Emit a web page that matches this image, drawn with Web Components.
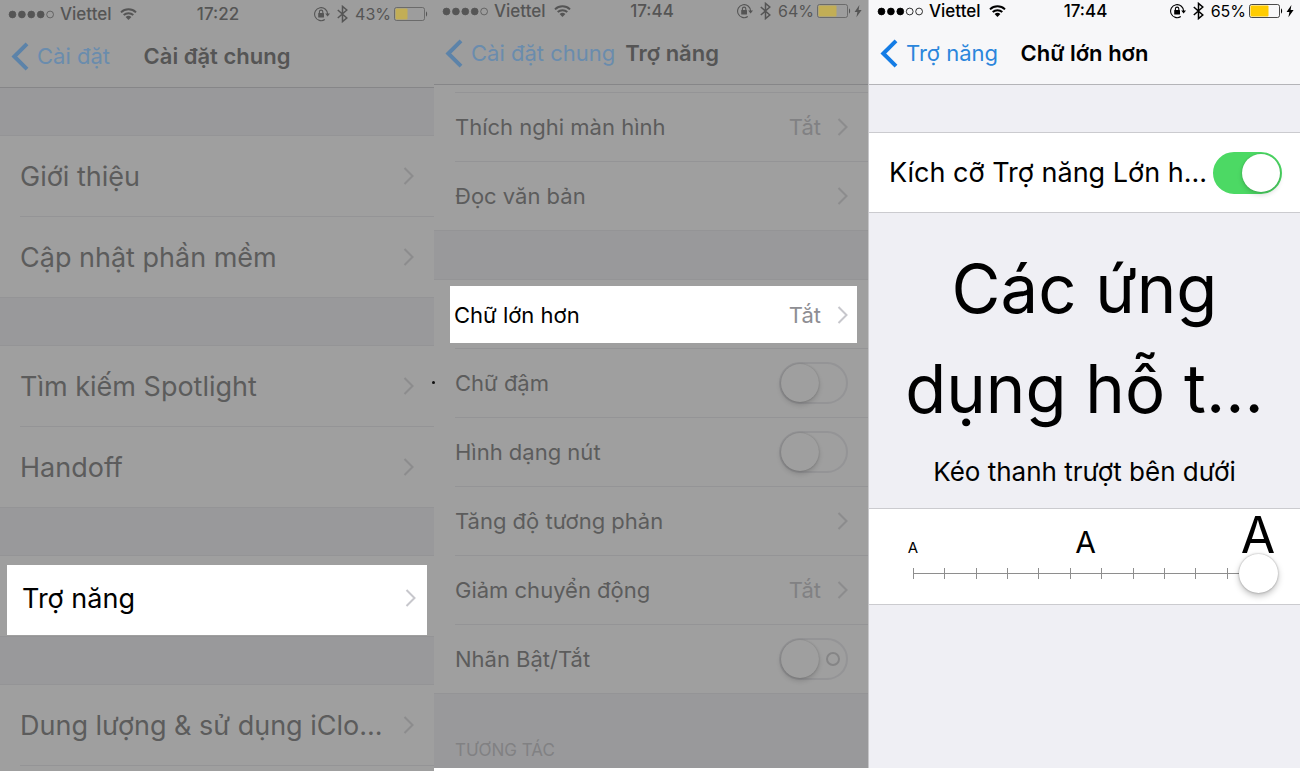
<!DOCTYPE html>
<html lang="vi">
<head>
<meta charset="utf-8">
<meta name="viewport" content="width=device-width, initial-scale=1">
<title>Trợ năng</title>
<style>
  html, body {
    height: 100%;
  }

  body {
    background: #ffffff;
    font-family: Inter, "Liberation Sans", sans-serif;
    margin: 0;
  }
</style>
</head>
<body>
<ios-gallery>
  <ios-screen dimmed offset>
    <ios-status slot="header" signal="4" time="17:22" battery="43"></ios-status>
    <ios-nav slot="header" back="Cài đặt" label="Cài đặt chung"></ios-nav>
    <ios-group>
      <ios-row label="Giới thiệu"></ios-row>
      <ios-row label="Cập nhật phần mềm"></ios-row>
    </ios-group>
    <ios-group>
      <ios-row label="Tìm kiếm Spotlight"></ios-row>
      <ios-row label="Handoff"></ios-row>
    </ios-group>
    <ios-group>
      <ios-row label="Trợ năng" highlighted></ios-row>
    </ios-group>
    <ios-group>
      <ios-row label="Dung lượng &amp; sử dụng iClo..."></ios-row>
      <ios-row label=""></ios-row>
    </ios-group>
  </ios-screen>
  <ios-screen dimmed compact>
    <ios-status slot="header" signal="4" time="17:44" battery="64" charging></ios-status>
    <ios-nav slot="header" back="Cài đặt chung" label="Trợ năng"></ios-nav>
    <ios-group continued>
      <ios-row label="Thích nghi màn hình" value="Tắt"></ios-row>
      <ios-row label="Đọc văn bản"></ios-row>
    </ios-group>
    <ios-group>
      <ios-row label="Chữ lớn hơn" value="Tắt" highlighted></ios-row>
      <ios-row label="Chữ đậm" type="switch"></ios-row>
      <ios-row label="Hình dạng nút" type="switch"></ios-row>
      <ios-row label="Tăng độ tương phản"></ios-row>
      <ios-row label="Giảm chuyển động" value="Tắt"></ios-row>
      <ios-row label="Nhãn Bật/Tắt" type="switch" marked></ios-row>
    </ios-group>
    <ios-caption>TƯƠNG TÁC</ios-caption>
  </ios-screen>
  <ios-screen>
    <ios-status slot="header" signal="3" time="17:44" battery="65" charging></ios-status>
    <ios-nav slot="header" back="Trợ năng" label="Chữ lớn hơn"></ios-nav>
    <ios-group>
      <ios-row label="Kích cỡ Trợ năng Lớn h..." type="switch" checked></ios-row>
    </ios-group>
    <ios-preview>
      Các ứng<br>dụng hỗ t...
      <span slot="hint">Kéo thanh trượt bên dưới</span>
    </ios-preview>
    <ios-text-size></ios-text-size>
  </ios-screen>
</ios-gallery>

<script>
  class IOSElement extends HTMLElement {
    constructor( markup ) {
      super();

      const template = document.createElement( 'template' );
      template.innerHTML = markup;

      // Root
      this.attachShadow( {mode: 'open'} );
      this.shadowRoot.appendChild( template.content.cloneNode( true ) );
    }

    $( selector ) {
      return this.shadowRoot.querySelector( selector );
    }
  }

  // Three screens side by side
  class IOSGallery extends IOSElement {
    constructor() {
      super( /* template */ `
        <style>
          :host {
            display: grid;
            grid-template-columns: 217fr 217fr 216fr;
            height: 100%;
            overflow: hidden;
            position: relative;
          }

          i {
            background: #111111;
            border-radius: 50%;
            height: 3px;
            left: 432px;
            position: absolute;
            top: 381px;
            width: 3px;
          }
        </style>
        <slot></slot>
        <i></i>
      ` );
    }
  }

  window.customElements.define( 'ios-gallery', IOSGallery );

  // Colours for everything inside come from here
  class IOSScreen extends IOSElement {
    constructor() {
      super( /* template */ `
        <style>
          :host {
            --bar: #f7f7f9;
            --page: #efeff4;
            --cell: #ffffff;
            --line: #cbcbcf;
            --bar-line: #b4b4b8;
            --ink: #000000;
            --title: #000000;
            --muted: #8e8e93;
            --arrow: #c7c7cc;
            --blue: #147ce5;
            --link: #2b86dc;
            --power: #ffcc00;
            --row: 79px;
            --text: 27px;
            --gap: 47px;
            --inset: 20px;
            --inset-right: 18px;
            background: var( --page );
            box-sizing: border-box;
            color: var( --ink );
            display: flex;
            flex-direction: column;
            margin-bottom: 3px;
            min-width: 0;
            overflow: hidden;
          }

          :host( :not( [dimmed] ) ) {
            border-left: 1px solid #c6c6c9;
          }

          :host( [dimmed] ) {
            --bar: #9d9d9d;
            --page: #99999b;
            --cell: #9f9f9f;
            --line: #949496;
            --bar-line: #868688;
            --ink: #5c5c5c;
            --title: #555555;
            --muted: #818183;
            --arrow: #8c8c8d;
            --blue: #5c83a9;
            --link: #6a8cad;
            --power: #c2ae56;
            --row: 80px;
            --inset-right: 20px;
          }

          :host( [compact] ) {
            --row: 68px;
            --text: 22px;
            --gap: 48px;
            --inset: 21px;
          }

          :host( [offset] ) {
            margin-bottom: 0;
          }

          header {
            background: var( --bar );
            border-bottom: 1px solid var( --bar-line );
            flex: none;
          }

          :host( [offset] ) header {
            padding-top: 3px;
          }
        </style>
        <header><slot name="header"></slot></header>
        <slot></slot>
      ` );
    }
  }

  window.customElements.define( 'ios-screen', IOSScreen );

  class IOSStatus extends IOSElement {
    constructor() {
      super( /* template */ `
        <style>
          :host {
            align-items: center;
            color: var( --title );
            display: grid;
            font-size: 17px;
            font-weight: 500;
            grid-template-columns: 1fr auto 1fr;
            height: 22px;
            padding: 0 6px 0 8px;
          }

          div {
            align-items: center;
            display: flex;
          }

          div:last-child {
            font-size: 16px;
            font-weight: 400;
            justify-content: flex-end;
          }

          svg {
            display: block;
            flex: none;
          }

          [part=wifi] {
            margin-left: 8px;
          }

          [part=signal] {
            margin-right: 5px;
          }

          [part=lock], [part=bluetooth] {
            margin-right: 7px;
          }

          [part=level] {
            margin-right: 3px;
          }

          [part=bolt] {
            display: none;
            margin-left: 3px;
          }

          :host( [charging] ) [part=bolt] {
            display: block;
          }
        </style>
        <div>
          <svg part="signal" width="47" height="9" viewBox="0 0 47 9" stroke="currentColor"></svg>
          <span>Viettel</span>
          <svg part="wifi" width="17" height="12" viewBox="0 0 17 12" fill="none" stroke="currentColor" stroke-width="2">
            <path d="M1 4.4a10.8 10.8 0 0 1 15 0M3.7 7.1a7 7 0 0 1 9.6 0"/>
            <path d="M5.6 9.1a4.2 4.2 0 0 1 5.8 0L8.5 12z" fill="currentColor" stroke="none"/>
          </svg>
        </div>
        <time></time>
        <div>
          <svg part="lock" width="16" height="16" viewBox="0 0 16 16" fill="none" stroke="currentColor">
            <path d="M10.8 13.5A6.5 6.5 0 1 1 13.6 8.4" stroke-width="1.1"/>
            <path d="M11.2 7.6h4.8L13.6 10.4z" fill="currentColor" stroke="none"/>
            <rect x="4.2" y="7" width="5.8" height="4.4" rx=".5" fill="currentColor" stroke="none"/>
            <path d="M5.4 7V5.8a1.7 1.7 0 0 1 3.4 0V7" stroke-width="1.1"/>
          </svg>
          <svg part="bluetooth" width="11" height="18" viewBox="0 0 11 18" fill="none" stroke="currentColor" stroke-width="1.5">
            <path d="M.8 5l9 8-4.300 3.600V1.400L9.800 5l-9 8"/>
          </svg>
          <span part="level"></span>
          <svg width="34" height="14" viewBox="0 0 34 14">
            <rect x=".5" y=".5" width="30" height="13" rx="2" fill="none" stroke="currentColor" stroke-opacity=".7"/>
            <rect part="charge" x="1.500" y="1.500" height="11" rx="1" fill="var( --power )"/>
            <path d="M32 4.500c1.500.4 1.500 4.600 0 5z" fill="currentColor"/>
          </svg>
          <svg part="bolt" width="8" height="14" viewBox="0 0 8 14" fill="currentColor">
            <path d="M5.400 1L.6 8h2.800L2.400 13.200 7.600 6H4.600z"/>
          </svg>
        </div>
      ` );
    }

    connectedCallback() {
      const signal = parseInt( this.getAttribute( 'signal' ) );
      const battery = parseInt( this.getAttribute( 'battery' ) );
      let dots = '';

      for( let d = 0; d < 5; d++ ) {
        const fill = d < signal ? 'currentColor' : 'none';
        dots += `<circle cx="${4.5 + d * 9.4}" cy="4.5" r="3.4" fill="${fill}" stroke-width=".8"/>`;
      }

      this.$( '[part=signal]' ).innerHTML = dots;
      this.$( 'time' ).textContent = this.getAttribute( 'time' );
      this.$( '[part=level]' ).textContent = `${battery}%`;
      this.$( '[part=charge]' ).setAttribute( 'width', Math.round( battery * 0.28 ) );
    }
  }

  window.customElements.define( 'ios-status', IOSStatus );

  class IOSNav extends IOSElement {
    constructor() {
      super( /* template */ `
        <style>
          :host {
            align-items: center;
            display: grid;
            font-size: 22px;
            grid-template-columns: 1fr auto 1fr;
            height: 62px;
            line-height: 28px;
            padding: 0 11px;
            white-space: nowrap;
          }

          a {
            align-items: center;
            color: var( --link );
            display: flex;
            gap: 8px;
            margin-right: 10px;
            text-decoration: none;
          }

          svg {
            color: var( --blue );
            flex: none;
          }

          h1 {
            color: var( --title );
            font-size: 22px;
            font-weight: 600;
            margin: 0;
          }
        </style>
        <a href="#">
          <svg width="18" height="29" viewBox="0 0 18 29" fill="none" stroke="currentColor" stroke-width="4">
            <path d="M16 1.800L3.300 14.500 16 27.200"/>
          </svg>
          <span></span>
        </a>
        <h1></h1>
      ` );
    }

    connectedCallback() {
      this.$( 'span' ).textContent = this.getAttribute( 'back' );
      this.$( 'h1' ).textContent = this.getAttribute( 'label' );
    }
  }

  window.customElements.define( 'ios-nav', IOSNav );

  class IOSGroup extends IOSElement {
    constructor() {
      super( /* template */ `
        <style>
          :host {
            background: var( --cell );
            border-bottom: 1px solid var( --line );
            border-top: 1px solid var( --line );
            display: block;
            flex: none;
            margin-top: var( --gap );
          }

          /* Scrolled under the bar, only the end of the row above shows */
          :host( [continued] ) {
            --first: 1px;
            border-top: none;
            margin-top: 0;
            padding-top: 7px;
          }
        </style>
        <slot></slot>
      ` );
    }
  }

  window.customElements.define( 'ios-group', IOSGroup );

  class IOSSwitch extends IOSElement {
    constructor() {
      super( /* template */ `
        <style>
          :host {
            display: block;
            flex: none;
          }

          input {
            appearance: none;
            align-items: center;
            background: var( --cell );
            border: 2px solid var( --line );
            border-radius: 21px;
            box-sizing: border-box;
            display: flex;
            height: 42px;
            margin: 0;
            width: 69px;
          }

          input::before {
            background: var( --cell );
            border-radius: 50%;
            box-shadow: 0 3px 5px rgba( 0, 0, 0, 0.15 ), 0 0 2px rgba( 0, 0, 0, 0.2 );
            content: '';
            height: 38px;
            width: 38px;
          }

          input:checked {
            background: #4cd964;
            border-color: #4cd964;
            justify-content: flex-end;
          }

          :host( [marked] ) input::after {
            border: 2px solid #858586;
            border-radius: 50%;
            content: '';
            height: 10px;
            margin-left: 7px;
            width: 10px;
          }
        </style>
        <input type="checkbox" role="switch">
      ` );
    }

    connectedCallback() {
      this.$( 'input' ).checked = this.hasAttribute( 'checked' );
      this.$( 'input' ).setAttribute( 'aria-label', this.getAttribute( 'label' ) );
    }
  }

  window.customElements.define( 'ios-switch', IOSSwitch );

  class IOSRow extends IOSElement {
    constructor() {
      super( /* template */ `
        <style>
          :host {
            display: block;
            white-space: nowrap;
          }

          /* Separator is inset to the text */
          :host::before {
            background: var( --line );
            content: '';
            display: block;
            height: 1px;
            margin-left: var( --inset );
          }

          :host( :first-child )::before {
            height: var( --first, 0 );
          }

          a, div {
            align-items: center;
            box-sizing: border-box;
            color: inherit;
            display: flex;
            font-size: var( --text );
            gap: 16px;
            height: var( --row );
            padding: 0 var( --inset-right ) 0 var( --inset );
            text-decoration: none;
          }

          div {
            gap: 6px;
          }

          .label {
            flex: 1;
          }

          .value {
            color: var( --muted );
          }

          svg {
            color: var( --arrow );
            flex: none;
          }

          :host( [highlighted] ) {
            --arrow: #c7c7cc;
            --muted: #8e8e93;
            align-items: stretch;
            box-sizing: border-box;
            color: #000000;
            display: flex;
            height: var( --row );
            padding: 9px 7px 1px 7px;
          }

          :host( [highlighted][value] ) {
            padding: 6px 11px 5px 16px;
          }

          :host( [highlighted] )::before {
            display: none;
          }

          :host( [highlighted] ) a {
            background: #ffffff;
            flex: 1;
            height: auto;
            padding: 0 11px 4px 15px;
          }

          :host( [highlighted][value] ) a {
            padding: 0 9px 0 4px;
          }
        </style>
      ` );
    }

    connectedCallback() {
      const label = this.getAttribute( 'label' );
      const toggle = this.getAttribute( 'type' ) === 'switch';
      const $row = document.createElement( toggle ? 'div' : 'a' );
      const $label = document.createElement( 'span' );

      $label.className = 'label';
      $label.textContent = label;
      $row.appendChild( $label );

      if( toggle ) {
        const $switch = document.createElement( 'ios-switch' );
        $switch.setAttribute( 'label', label );
        $switch.toggleAttribute( 'checked', this.hasAttribute( 'checked' ) );
        $switch.toggleAttribute( 'marked', this.hasAttribute( 'marked' ) );
        $row.appendChild( $switch );
      } else {
        $row.href = '#';

        if( this.hasAttribute( 'value' ) ) {
          const $value = document.createElement( 'span' );
          $value.className = 'value';
          $value.textContent = this.getAttribute( 'value' );
          $row.appendChild( $value );
        }

        $row.insertAdjacentHTML( 'beforeend', `
          <svg width="11" height="18" viewBox="0 0 11 18" fill="none" stroke="currentColor" stroke-width="2">
            <path d="M1.500 1L9.500 9l-8 8"/>
          </svg>
        ` );
      }

      this.shadowRoot.appendChild( $row );
    }
  }

  window.customElements.define( 'ios-row', IOSRow );

  class IOSCaption extends IOSElement {
    constructor() {
      super( /* template */ `
        <style>
          :host {
            color: var( --muted );
            display: block;
            font-size: 17px;
            line-height: 20px;
            padding: 46px 20px 8px 21px;
          }
        </style>
        <slot></slot>
      ` );
    }
  }

  window.customElements.define( 'ios-caption', IOSCaption );

  // Sample text at the chosen size
  class IOSPreview extends IOSElement {
    constructor() {
      super( /* template */ `
        <style>
          :host {
            display: block;
            padding: 26px 0 20px 0;
            text-align: center;
            white-space: nowrap;
          }

          p {
            font-size: 67px;
            line-height: 100px;
            margin: 0;
          }

          small {
            display: block;
            font-size: 26px;
            line-height: 32px;
            margin-top: 17px;
          }
        </style>
        <p><slot></slot></p>
        <small><slot name="hint"></slot></small>
      ` );
    }
  }

  window.customElements.define( 'ios-preview', IOSPreview );

  class IOSTextSize extends IOSElement {
    constructor() {
      super( /* template */ `
        <style>
          :host {
            background: var( --cell );
            border-bottom: 1px solid var( --line );
            border-top: 1px solid var( --line );
            display: block;
            padding: 0 22px 11px 24px;
          }

          .sizes {
            align-items: baseline;
            box-sizing: border-box;
            display: flex;
            height: 45px;
            justify-content: space-between;
            line-height: 20px;
            padding-top: 3px;
          }

          .sizes span {
            text-align: center;
            width: 40px;
          }

          .small {
            font-size: 15px;
          }

          .medium {
            font-size: 30px;
          }

          .sizes .large {
            font-size: 50px;
            line-height: 46px;
          }

          .slider {
            align-items: center;
            display: grid;
          }

          .ticks, input {
            grid-area: 1 / 1;
          }

          .ticks {
            background: linear-gradient( #8e8e8e, #8e8e8e ) center / 100% 1px no-repeat;
            display: flex;
            justify-content: space-between;
            margin: 0 19px 0 20px;
          }

          .ticks i {
            background: #8e8e8e;
            height: 11px;
            width: 1px;
          }

          input {
            appearance: none;
            background: none;
            height: 39px;
            margin: 0;
            width: 100%;
          }

          input::-webkit-slider-thumb {
            appearance: none;
            background: #ffffff;
            border-radius: 50%;
            box-shadow: 0 3px 6px rgba( 0, 0, 0, 0.25 ), 0 0 2px rgba( 0, 0, 0, 0.35 );
            height: 39px;
            width: 39px;
          }
        </style>
        <div class="sizes">
          <span class="small">A</span>
          <span class="medium">A</span>
          <span class="large">A</span>
        </div>
        <div class="slider">
          <div class="ticks">${'<i></i>'.repeat( 12 )}</div>
          <input type="range" min="0" max="11" value="11" aria-label="Cỡ chữ">
        </div>
      ` );
    }
  }

  window.customElements.define( 'ios-text-size', IOSTextSize );
</script>
</body>
</html>
